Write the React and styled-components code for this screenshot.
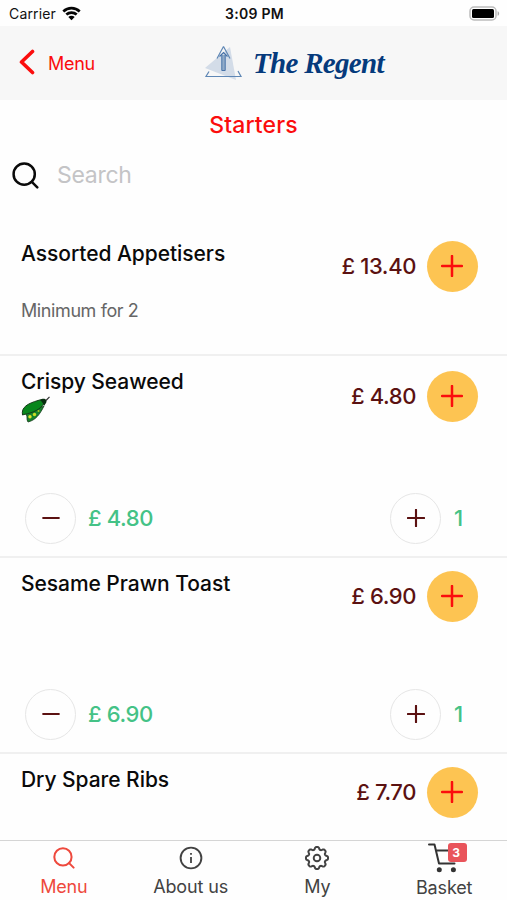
import styled, { createGlobalStyle } from 'styled-components'

const GlobalStyle = createGlobalStyle`
    * {
        box-sizing: border-box;
    }
    body {
        margin: 0;
        background-color: #fff;
        font-family: Inter, 'Liberation Sans', sans-serif;
    }
`

const Screen = styled.div`
    width: 507px;
    height: 900px;
    display: flex;
    flex-direction: column;
    overflow: hidden;
    background-color: #fefefe;
`
const StatusBar = styled.div`
    height: 26px;
    flex-shrink: 0;
    display: grid;
    grid-template-columns: 1fr auto 1fr;
    align-items: center;
    padding: 1px 7px 0 9px;
    font-size: 14px;
    color: #111;
`
const Carrier = styled.div`
    display: flex;
    align-items: center;
    gap: 6px;
    letter-spacing: 0.15px;
`
const Clock = styled.span`
    font-weight: 600;
    letter-spacing: 0.3px;
`
const Battery = styled.svg`
    justify-self: end;
`
const Header = styled.header`
    height: 74px;
    flex-shrink: 0;
    display: flex;
    align-items: center;
    padding-left: 19px;
    background-color: #f7f7f7;
`
const BackButton = styled.div`
    width: 185px;
    display: flex;
    align-items: center;
    gap: 13px;
    padding-bottom: 2px;
    color: #fb0d0d;
    font-size: 18px;
    letter-spacing: -0.3px;
`
const BackLabel = styled.span`
    padding-top: 2px;
`
const Brand = styled.div`
    display: flex;
    align-items: center;
    gap: 10px;
`
const BrandName = styled.span`
    font-family: 'Liberation Serif', serif;
    font-size: 29px;
    font-weight: 700;
    font-style: italic;
    line-height: 36px;
    letter-spacing: -0.7px;
    white-space: nowrap;
    color: #053a7c;
`
const Title = styled.h1`
    height: 50px;
    flex-shrink: 0;
    margin: 0;
    text-align: center;
    font-size: 23px;
    font-weight: 500;
    line-height: 50px;
    letter-spacing: 0.1px;
    color: #fb0d0d;
`
const SearchBox = styled.div`
    height: 50px;
    flex-shrink: 0;
    display: flex;
    align-items: center;
    gap: 18px;
    padding-left: 12px;
    color: #c4c4c6;
    font-size: 23px;
    letter-spacing: -0.3px;
`
const List = styled.main`
    flex: 1;
    min-height: 0;
    overflow: hidden;
    padding-top: 28px;
`
const Item = styled.section`
    height: ${(props) => props.$height}px;
    display: flex;
    flex-direction: column;
    justify-content: space-between;
    padding-bottom: 12px;
    border-bottom: 2px solid #f0f0f0;
`
const ItemTop = styled.div`
    display: flex;
    justify-content: space-between;
    padding: 0 29px 0 21px;
`
const ItemInfo = styled.div`
    display: flex;
    flex-direction: column;
    padding-top: 12px;
`
const ItemName = styled.span`
    font-size: 21px;
    font-weight: 500;
    line-height: 28px;
    letter-spacing: -0.05px;
    color: #0a0a0a;
`
const ItemNote = styled.span`
    margin-top: 31px;
    font-size: 18px;
    line-height: 24px;
    letter-spacing: -0.4px;
    color: #666;
`
const ItemBuy = styled.div`
    height: 51px;
    display: flex;
    align-items: center;
    gap: 11px;
    margin-top: ${(props) => props.$offset || 13}px;
`
const Price = styled.span`
    padding-bottom: 2px;
    font-size: 22px;
    font-weight: 500;
    letter-spacing: -0.4px;
    color: #5b1111;
`
const AddButton = styled.div`
    width: 51px;
    height: 51px;
    display: flex;
    align-items: center;
    justify-content: center;
    padding: 0 1px 2px 0;
    border-radius: 50%;
    background-color: #fdc452;
    color: #fb0d0d;
`
const Quantity = styled.div`
    display: flex;
    align-items: center;
    padding: 0 42px 0 25px;
    font-size: 22px;
    font-weight: 500;
    letter-spacing: -0.4px;
    color: #44c286;
`
const RoundButton = styled.div`
    width: 51px;
    height: 51px;
    display: flex;
    align-items: center;
    justify-content: center;
    padding-bottom: 2px;
    border: 1.5px solid #e6e6e6;
    border-radius: 50%;
    color: #5b1111;
`
const Total = styled.span`
    flex: 1;
    padding: 0 0 2px 12px;
`
const Count = styled.span`
    width: 24px;
    padding: 0 0 2px 13px;
`
const TabBar = styled.nav`
    height: 60px;
    flex-shrink: 0;
    display: flex;
    border-top: 1px solid #d5d5d5;
`
const Tab = styled.div`
    flex: 1;
    display: flex;
    flex-direction: column;
    align-items: center;
    padding-left: 1px;
    font-size: 18px;
    letter-spacing: -0.15px;
    color: ${(props) => (props.$active ? '#ee493d' : '#424242')};
`
const TabIcon = styled.div`
    height: 34px;
    display: flex;
    align-items: center;
    position: relative;
`
const TabLabel = styled.span`
    line-height: 26px;
`
const Badge = styled.span`
    position: absolute;
    top: 2px;
    right: -7px;
    width: 19px;
    height: 19px;
    padding-right: 3px;
    border-radius: 3px;
    background-color: #e9545b;
    color: #fff;
    font-size: 12px;
    font-weight: 700;
    line-height: 20px;
    text-align: center;
`

const WifiIcon = () => (
    <svg width='19' height='15' viewBox='0 0 19 15'>
        <g fill='none' stroke='#050505' strokeWidth='2.7'>
            <path d='M1.3 5.4c4.7-4.3 11.7-4.3 16.4 0' />
            <path d='M4.3 8.6c3-2.7 7.4-2.7 10.4 0' />
        </g>
        <path d='M6.3 11c1.8-1.7 4.6-1.7 6.4 0L9.5 14.2z' fill='#050505' />
    </svg>
)

const BatteryIcon = () => (
    <Battery width='31' height='15' viewBox='0 0 31 15'>
        <rect x='1' y='1' width='26' height='13' rx='4' fill='#fff' stroke='#bcbcbc' strokeWidth='1.5' />
        <rect x='3' y='3' width='22' height='9' rx='1.5' fill='#000' />
        <path d='M28.6 5.2c2 .7 2 3.9 0 4.6z' fill='#aaa' />
    </Battery>
)

const BackIcon = () => (
    <svg width='16' height='26' viewBox='0 0 16 26'>
        <path
            d='M13.5 2.5L2.5 13l11 10.5'
            fill='none'
            stroke='currentColor'
            strokeWidth='3.6'
            strokeLinecap='round'
            strokeLinejoin='round'
        />
    </svg>
)

const LogoIcon = () => (
    <svg width='39' height='38' viewBox='0 0 39 38'>
        <path d='M26 3L32 36L1 24z' fill='#d3dce8' />
        <path
            d='M19.5 2.5L26 14.5M19.5 2.5L13 14.500M5 27.500L2 32.500h35l-3-5.500'
            fill='none'
            stroke='#5f87b5'
            strokeWidth='1.2'
        />
        <path d='M17.800 11v15.500h3.400V11' fill='#91abc9' stroke='#4672a8' strokeWidth='1' />
        <path d='M15.500 12.500l4-4l4 4' fill='none' stroke='#4672a8' strokeWidth='1.200' />
    </svg>
)

const SearchIcon = ({ size, stroke }) => (
    <svg width={size} height={size} viewBox='0 0 27 27' fill='none' stroke='currentColor' strokeLinecap='round'>
        <circle cx='12.2' cy='12.2' r='10.6' strokeWidth={stroke} />
        <path d='M19.8 19.8l5.5 5.5' strokeWidth={stroke} />
    </svg>
)

const SearchMark = styled.span`
    display: flex;
    color: #0a0a0a;
`

const PlusIcon = ({ size, stroke = 2 }) => (
    <svg width={size} height={size} viewBox='0 0 22 22' stroke='currentColor' strokeWidth={stroke} strokeLinecap='round'>
        <path d='M11 1v20M1 11h20' />
    </svg>
)

const MinusIcon = () => (
    <svg width='18' height='18' viewBox='0 0 18 18' stroke='currentColor' strokeWidth='2.2' strokeLinecap='round'>
        <path d='M1.2 9h15.600' />
    </svg>
)

const PodIcon = () => (
    <svg width='30' height='28' viewBox='0 0 30 28'>
        <path d='M5 18c2 3 0 5 2 8 8-2 12-8 16-16z' fill='#16832b' stroke='#143a19' strokeWidth='0.8' />
        <path d='M1.500 19C0 11 7 7.500 17 4.500c5-2 8 0 6 3-4 6-10 9-20 11z' fill='#08861c' stroke='#133b17' strokeWidth='1' />
        <path d='M19 4c4-3 8 0 6 3l-2 3c-1-3-2-4-4-6z' fill='#082e10' />
        <path d='M25 4.500L28.500.800' stroke='#333' strokeWidth='1.200' />
        <circle cx='9' cy='20.800' r='1.700' fill='#dfe529' />
        <circle cx='13.500' cy='18.500' r='1.700' fill='#c9dc24' />
        <circle cx='17.500' cy='15' r='1' fill='#a9c421' />
    </svg>
)

const InfoIcon = () => (
    <svg width='24' height='24' viewBox='0 0 24 24' fill='none' stroke='currentColor'>
        <circle cx='12' cy='12' r='10.4' strokeWidth='1.9' />
        <path d='M12 11v6' strokeWidth='1.8' />
        <path d='M12 7v1.8' strokeWidth='1.8' />
    </svg>
)

// outline of the gear: eight rounded teeth around the centre
const gearPoints = Array.from({ length: 160 }, (_, i) => {
    const angle = (i / 160) * Math.PI * 2
    const radius = 9.8 + 1.3 * Math.tanh(1.6 * Math.cos(8 * angle) + 0.3)
    return `${(13 + radius * Math.cos(angle)).toFixed(2)},${(13 + radius * Math.sin(angle)).toFixed(2)}`
}).join(' ')

const GearIcon = () => (
    <svg width='26' height='26' viewBox='0 0 26 26' fill='none' stroke='currentColor' strokeLinejoin='round'>
        <polygon points={gearPoints} strokeWidth='2' />
        <circle cx='13' cy='13' r='3.3' strokeWidth='1.9' />
    </svg>
)

const CartIcon = () => (
    <svg width='32' height='34' viewBox='0 0 32 34' fill='none' stroke='#333' strokeWidth='2'>
        <path d='M1 3.5h5.5l4.5 19h15.500M8 9.500h18l-2.500 9.500' strokeLinejoin='round' strokeLinecap='round' />
        <circle cx='11.3' cy='28.8' r='2.5' fill='#333' stroke='none' />
        <circle cx='25.4' cy='28.8' r='2.5' fill='#333' stroke='none' />
    </svg>
)

const items = [
    { name: 'Assorted Appetisers', note: 'Minimum for 2', price: '13.40', height: 128 },
    { name: 'Crispy Seaweed', veg: true, price: '4.80', total: '4.80', count: 1, height: 202, offset: 15 },
    { name: 'Sesame Prawn Toast', price: '6.90', total: '6.90', count: 1, height: 196 },
    { name: 'Dry Spare Ribs', price: '7.70', height: 150 }
]

export default function App() {
    return (
        <Screen>
            <GlobalStyle />
            <StatusBar>
                <Carrier>
                    Carrier
                    <WifiIcon />
                </Carrier>
                <Clock>3:09 PM</Clock>
                <BatteryIcon />
            </StatusBar>
            <Header>
                <BackButton>
                    <BackIcon />
                    <BackLabel>Menu</BackLabel>
                </BackButton>
                <Brand>
                    <LogoIcon />
                    <BrandName>The Regent</BrandName>
                </Brand>
            </Header>
            <Title>Starters</Title>
            <SearchBox>
                <SearchMark>
                    <SearchIcon size={27} stroke={2.5} />
                </SearchMark>
                Search
            </SearchBox>
            <List>
                {items.map((item) => (
                    <Item key={item.name} $height={item.height}>
                        <ItemTop>
                            <ItemInfo>
                                <ItemName>{item.name}</ItemName>
                                {item.veg && <PodIcon />}
                                {item.note && <ItemNote>{item.note}</ItemNote>}
                            </ItemInfo>
                            <ItemBuy $offset={item.offset}>
                                <Price>£ {item.price}</Price>
                                <AddButton>
                                    <PlusIcon size={22} stroke={2.5} />
                                </AddButton>
                            </ItemBuy>
                        </ItemTop>
                        {item.count && (
                            <Quantity>
                                <RoundButton>
                                    <MinusIcon />
                                </RoundButton>
                                <Total>£ {item.total}</Total>
                                <RoundButton>
                                    <PlusIcon size={18} stroke={2.6} />
                                </RoundButton>
                                <Count>{item.count}</Count>
                            </Quantity>
                        )}
                    </Item>
                ))}
            </List>
            <TabBar>
                <Tab $active>
                    <TabIcon>
                        <SearchIcon size={22} stroke={2.5} />
                    </TabIcon>
                    <TabLabel>Menu</TabLabel>
                </Tab>
                <Tab>
                    <TabIcon>
                        <InfoIcon />
                    </TabIcon>
                    <TabLabel>About us</TabLabel>
                </Tab>
                <Tab>
                    <TabIcon>
                        <GearIcon />
                    </TabIcon>
                    <TabLabel>My</TabLabel>
                </Tab>
                <Tab>
                    <TabIcon>
                        <CartIcon />
                        <Badge>3</Badge>
                    </TabIcon>
                    <TabLabel>Basket</TabLabel>
                </Tab>
            </TabBar>
        </Screen>
    )
}
